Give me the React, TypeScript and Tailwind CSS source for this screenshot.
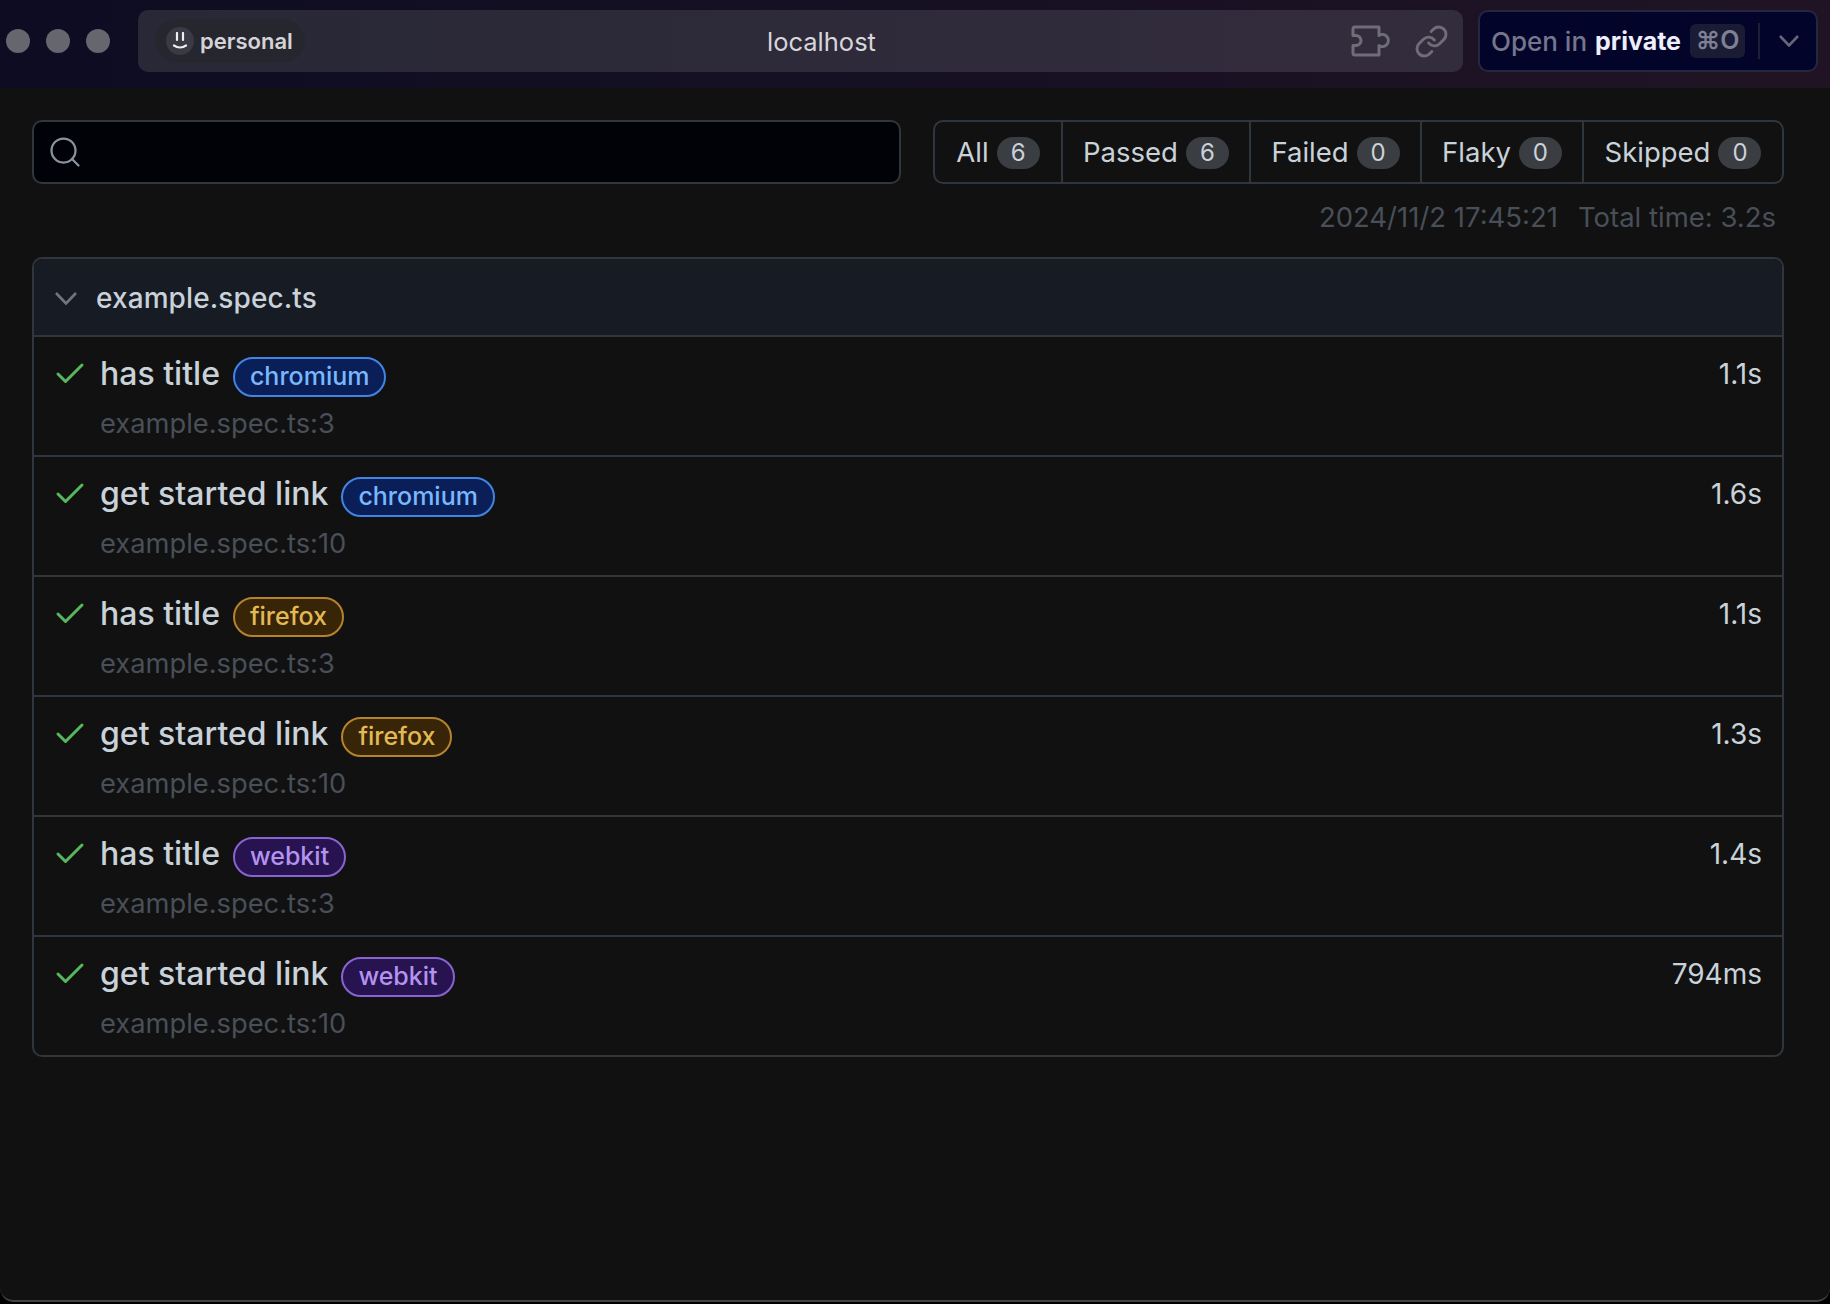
import React from 'react';
import { Check, Link, Search } from 'lucide-react';

const rows = [
  { title: 'has title', project: 'chromium', line: 3, time: '1.1s' },
  { title: 'get started link', project: 'chromium', line: 10, time: '1.6s' },
  { title: 'has title', project: 'firefox', line: 3, time: '1.1s' },
  { title: 'get started link', project: 'firefox', line: 10, time: '1.3s' },
  { title: 'has title', project: 'webkit', line: 3, time: '1.4s' },
  { title: 'get started link', project: 'webkit', line: 10, time: '794ms' },
];

const badgeColors: Record<string, string> = {
  chromium: 'bg-[#0a1f57] border-[#4184e4] text-[#79b8ff]',
  firefox: 'bg-[#382407] border-[#b5832c] text-[#e3b955]',
  webkit: 'bg-[#26134f] border-[#8a63d2] text-[#b392f0]',
};

const filters = [
  { label: 'All', count: 6, width: 'w-[126px]' },
  { label: 'Passed', count: 6, width: 'w-[188px]' },
  { label: 'Failed', count: 0, width: 'w-[171px]' },
  { label: 'Flaky', count: 0, width: 'w-[162px]' },
  { label: 'Skipped', count: 0, width: 'flex-1' },
];

function Dot() {
  return <div className="w-6 h-6 rounded-full bg-[#66666f]" />;
}

function Puzzle() {
  return (
    <svg width="39" height="32" viewBox="0 0 39 32" fill="none" stroke="#6f6d78" strokeWidth="3" strokeLinejoin="round">
      <path d="M2 4a2 2 0 0 1 2-2h24v8.500a6 6 0 1 1 0 10v9.500H4a2 2 0 0 1-2-2v-7.500h3a5 5 0 1 0 0-10H2z" />
    </svg>
  );
}

function Chevron({ color, w, h }: { color: string; w: number; h: number }) {
  return (
    <svg width={w} height={h} viewBox={`0 0 ${w} ${h}`} fill="none" stroke={color} strokeWidth="2.6">
      <path d={`M1 1L${w / 2} ${h - 1.500}L${w - 1} 1`} />
    </svg>
  );
}

export default function App() {
  return (
    <div className="w-[1830px] h-[1304px] bg-black font-['Inter',sans-serif] overflow-hidden">
      <div className="h-[1302px] flex flex-col bg-[#111111] border-b-2 border-[#444444] rounded-b-[14px] overflow-hidden">
        {/* browser chrome */}
        <div className="h-[88px] shrink-0 flex items-start pt-[10px] bg-gradient-to-r from-[#0d0c22] to-[#201424]">
          <div className="w-[138px] h-[62px] flex items-center gap-4 pl-1.5">
            <Dot />
            <Dot />
            <Dot />
          </div>
          <div className="w-[1325px] h-[62px] rounded-[10px] bg-gradient-to-r from-[#282836] to-[#332c3c] flex items-center pl-[17px] pr-[14px]">
            <div className="h-11 w-[150px] rounded-full bg-[#26262f] flex items-center gap-1.5 pl-[11px]">
              <div className="w-7 h-7 rounded-full bg-[#3a3a44] flex items-center justify-center">
                <svg width="16" height="18" viewBox="0 0 16 18" fill="none" stroke="#eeeef0" strokeWidth="2.2" strokeLinecap="round">
                  <path d="M5 1v7M11 1v7M2 13.500c3.500 2.400 8.500 2.400 12 0" />
                </svg>
              </div>
              <span className="text-[22px] font-semibold text-[#d4d4d8]">personal</span>
            </div>
            <span className="ml-[462px] pt-[2px] text-[25.500px] leading-9 text-[#d6d6dc]">localhost</span>
            <div className="ml-auto flex items-center gap-[24px]">
              <Puzzle />
              <Link size={35} strokeWidth={2} className="text-[#6f6d78]" />
            </div>
          </div>
          <div className="ml-[15px] w-[340px] h-[62px] rounded-[10px] border-2 border-[#25263f] bg-[#03042a] flex items-center pl-[11px]">
            <span className="text-[26px] font-medium text-[#75768c]">Open in</span>
            <span className="text-[25px] font-bold text-[#eeeefc] ml-2 pt-[1px]">private</span>
            <span className="ml-[9px] h-[34px] w-[55px] rounded-md bg-[#1a1c36] flex items-center justify-center text-[25px] font-semibold text-[#7f8094]">⌘O</span>
            <div className="ml-[13px] w-0.5 h-9 bg-[#1f2038]" />
            <div className="ml-[19px]">
              <Chevron color="#65667c" w={20} h={12} />
            </div>
          </div>
        </div>

        <div className="flex-1 pt-8 pl-[32px] pr-[46px]">
          {/* search + filters */}
          <div className="flex justify-between">
            <div className="w-[869px] h-[64px] rounded-[10px] border-2 border-[#30363d] bg-[#010208] flex items-center pl-[13px]">
              <Search size={36} strokeWidth={1.5} className="text-[#8b949e]" />
            </div>
            <div className="w-[851px] h-[64px] rounded-[10px] border-2 border-[#30363d] flex">
              {filters.map((f, i) => (
                <div key={f.label} className={`${f.width} flex items-center justify-center gap-2 pt-[1px] ${i > 0 ? 'border-l-2 border-[#30363d]' : ''}`}>
                  <span className="text-[27.500px] text-[#c9d1d9]">{f.label}</span>
                  <span className="w-[43px] h-8 rounded-full bg-[#3a3d42] flex items-center justify-center text-[24px] text-[#c9d1d9]">{f.count}</span>
                </div>
              ))}
            </div>
          </div>

          <div className="flex justify-end gap-[20px] pr-2 mt-[15px] text-[27.500px] leading-9 text-[#484f58]">
            <span>2024/11/2 17:45:21</span>
            <span>Total time: 3.2s</span>
          </div>

          {/* test file card */}
          <div className="mt-[22px] rounded-[10px] border-2 border-[#30363d] overflow-hidden">
            <div className="h-[76px] bg-[#171b24] flex items-center pl-[21px] pt-[2px] gap-[19px]">
              <Chevron color="#6e7681" w={22} h={13} />
              <span className="text-[28px] font-medium text-[#c9d1d9] tracking-[0.1px]">example.spec.ts</span>
            </div>
            {rows.map((r, i) => (
              <div key={i} className="h-[120px] border-t-2 border-[#30363d] flex pl-[18px] pr-[20px] pt-[15px]">
                <Check size={36} strokeWidth={2} className="text-[#56b85a] mt-[4px]" />
                <div className="ml-[12px] flex-1">
                  <div className="flex items-center h-[44px]">
                    <span className="text-[32px] font-medium text-[#c9d1d9]">{r.title}</span>
                    <span className={`ml-[13px] mt-[5px] h-10 px-[15px] rounded-full border-2 flex items-center text-[25px] font-medium ${badgeColors[r.project]}`}>{r.project}</span>
                  </div>
                  <div className="mt-[10px] text-[27.300px] leading-9 text-[#484f58]">example.spec.ts:{r.line}</div>
                </div>
                <span className="text-[28px] leading-9 mt-[4px] text-[#c9d1d9]">{r.time}</span>
              </div>
            ))}
          </div>
        </div>
      </div>
    </div>
  );
}
